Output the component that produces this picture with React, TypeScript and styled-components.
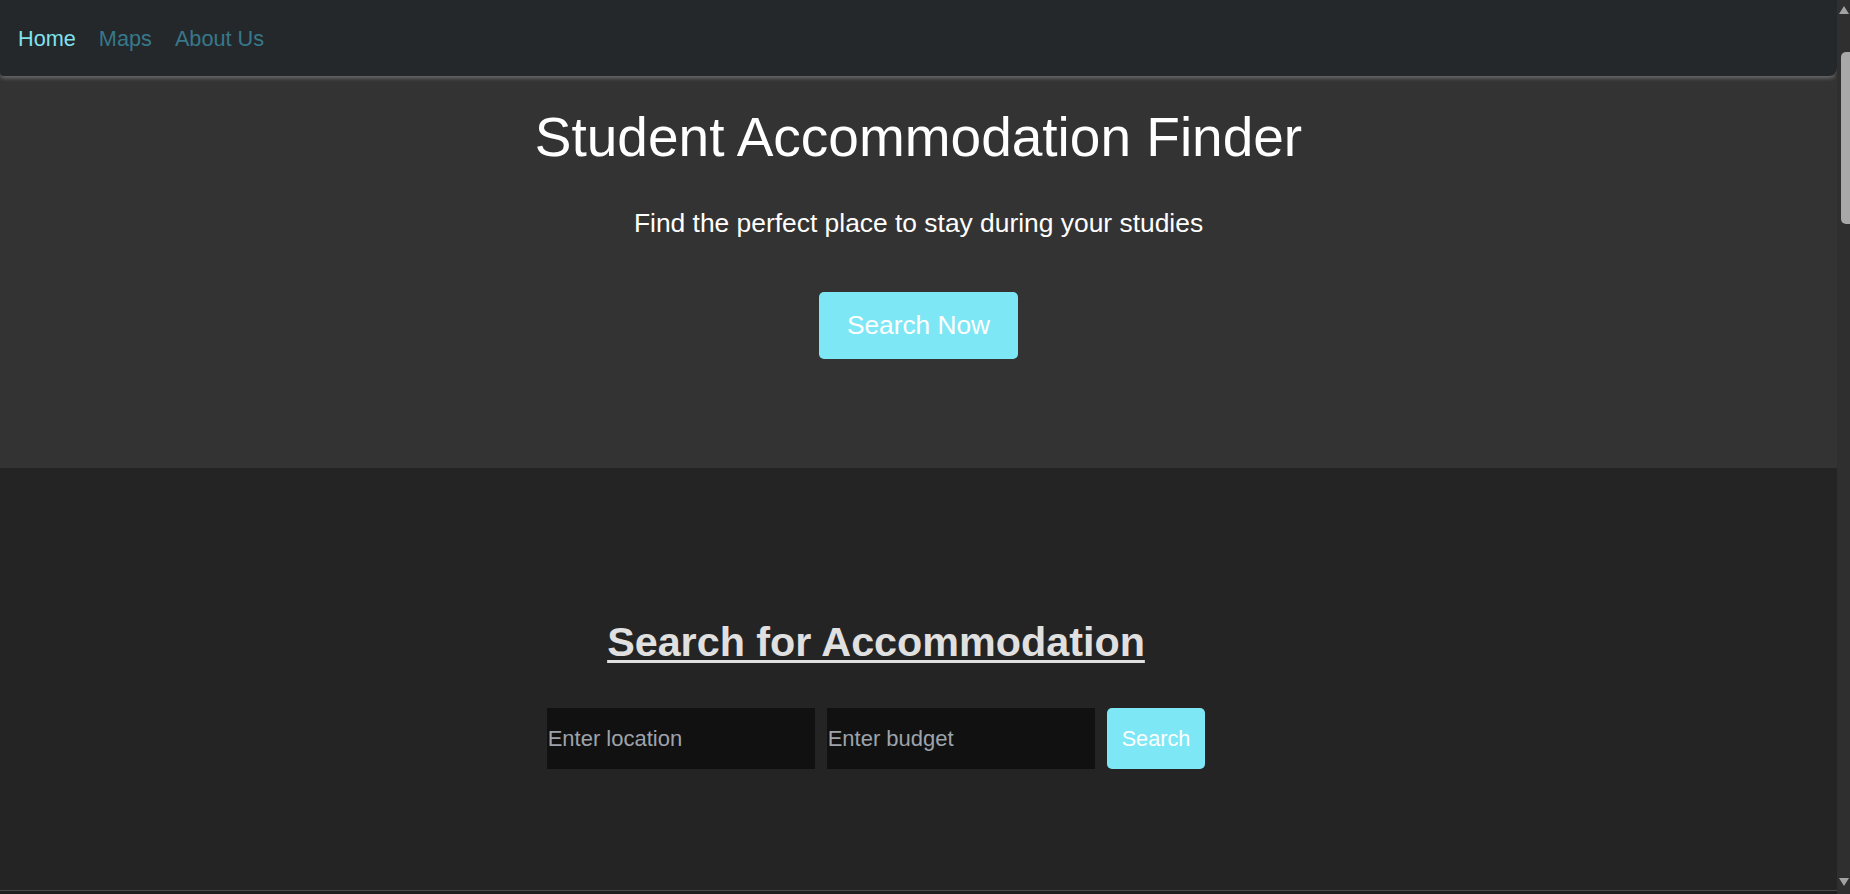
import React from 'react';
import styled, { createGlobalStyle } from 'styled-components';

const GlobalStyle = createGlobalStyle`
  html, body {
    margin: 0;
    padding: 0;
    background: #242424;
    font-family: 'Liberation Sans', Arial, sans-serif;
  }
  * {
    box-sizing: border-box;
  }
`;

const Page = styled.div`
  display: flex;
  flex-direction: column;
  margin-right: 13px;
`;

const NavBar = styled.nav`
  position: relative;
  z-index: 2;
  height: 76px;
  display: flex;
  align-items: center;
  gap: 23px;
  padding-left: 18px;
  background: #24282a;
  border-radius: 0 0 8px 4px;
  box-shadow: 0 2px 4px rgba(160, 160, 160, 0.55);
`;

const NavLink = styled.a<{ $active?: boolean }>`
  font-size: 21.7px;
  line-height: 25px;
  margin-top: 1px;
  color: ${(p) => (p.$active ? '#80e1ef' : '#37788a')};
  text-decoration: none;
  cursor: pointer;
`;

const Hero = styled.header`
  display: flex;
  flex-direction: column;
  align-items: center;
  padding: 30px 0 109px;
  background: #333333;
  color: #ffffff;
`;

const HeroTitle = styled.h1`
  margin: 0;
  font-size: 55px;
  font-weight: 400;
  line-height: 63px;
`;

const HeroSubtitle = styled.p`
  margin: 39px 0 0;
  font-size: 26.4px;
  line-height: 30px;
`;

const PrimaryButton = styled.button<{ $size?: 'lg' | 'sm' }>`
  border: none;
  border-radius: 5px;
  background: #7ee7f5;
  color: #ffffff;
  font-family: inherit;
  cursor: pointer;
  height: ${(p) => (p.$size === 'lg' ? '67px' : '61px')};
  padding: ${(p) => (p.$size === 'lg' ? '0 28px' : '0 15px')};
  font-size: ${(p) => (p.$size === 'lg' ? '26.3px' : '21.7px')};
`;

const HeroButtonWrap = styled.div`
  margin-top: 54px;
`;

const SearchSection = styled.section`
  display: flex;
  flex-direction: column;
  align-items: center;
  height: 422px;
  padding: 151px 85px 0 0;
  background: #242424;
`;

const SectionTitle = styled.h2`
  margin: 0;
  font-size: 41.3px;
  line-height: 47px;
  font-weight: 700;
  color: #e0e0e0;
  text-decoration: underline;
  text-decoration-thickness: 3px;
  text-underline-offset: 4px;
`;

const SearchForm = styled.form`
  display: flex;
  gap: 12px;
  margin-top: 42px;
`;

const SearchInput = styled.input`
  width: 268px;
  height: 61px;
  border: none;
  outline: none;
  padding: 0 1px;
  background: #111111;
  color: #e0e0e0;
  font-family: inherit;
  font-size: 22px;

  &::placeholder {
    color: #9ea3ab;
  }
`;

const Listings = styled.section`
  min-height: 3600px;
  border-top: 1px solid #4a4a4a;
  background: #1e1e1e;
`;

/* browser scrollbar, drawn since the headless window hides the real one */
const ScrollTrack = styled.div`
  position: fixed;
  top: 0;
  right: 0;
  bottom: 0;
  width: 13px;
  z-index: 5;
  display: flex;
  flex-direction: column;
  align-items: flex-end;
  background: #2f2f2f;
`;

const ScrollArrow = styled.div<{ $dir: 'up' | 'down' }>`
  width: 0;
  height: 0;
  margin: ${(p) => (p.$dir === 'up' ? '6px 1px 0 0' : 'auto 1px 8px 0')};
  border-left: 5px solid transparent;
  border-right: 5px solid transparent;
  ${(p) =>
    p.$dir === 'up'
      ? 'border-bottom: 8px solid #a3a3a3;'
      : 'border-top: 8px solid #a3a3a3;'}
`;

const ScrollThumb = styled.div`
  width: 9px;
  height: 172px;
  margin-top: 38px;
  border-radius: 5px 0 0 5px;
  background: #a8a8a8;
`;

export default function App() {
  return (
    <>
      <GlobalStyle />
      <Page>
        <NavBar>
          <NavLink $active>Home</NavLink>
          <NavLink>Maps</NavLink>
          <NavLink>About Us</NavLink>
        </NavBar>
        <Hero>
          <HeroTitle>Student Accommodation Finder</HeroTitle>
          <HeroSubtitle>Find the perfect place to stay during your studies</HeroSubtitle>
          <HeroButtonWrap>
            <PrimaryButton $size="lg">Search Now</PrimaryButton>
          </HeroButtonWrap>
        </Hero>
        <SearchSection>
          <SectionTitle>Search for Accommodation</SectionTitle>
          <SearchForm onSubmit={(e) => e.preventDefault()}>
            <SearchInput placeholder="Enter location" />
            <SearchInput placeholder="Enter budget" />
            <PrimaryButton $size="sm" type="submit">
              Search
            </PrimaryButton>
          </SearchForm>
        </SearchSection>
        <Listings />
      </Page>
      <ScrollTrack>
        <ScrollArrow $dir="up" />
        <ScrollThumb />
        <ScrollArrow $dir="down" />
      </ScrollTrack>
    </>
  );
}
